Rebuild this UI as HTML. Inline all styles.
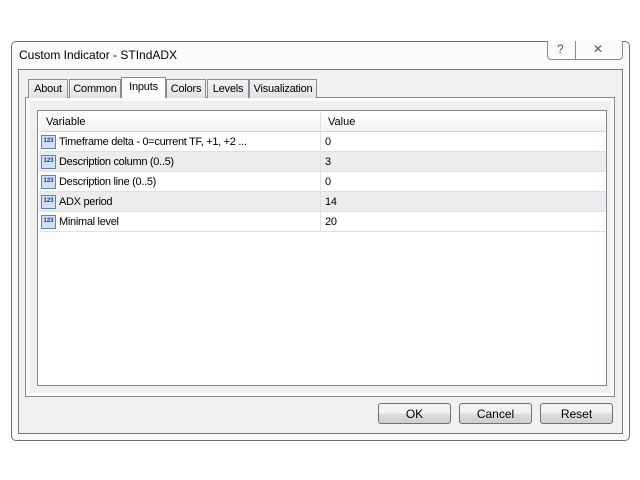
<!DOCTYPE html>
<html><head><style>
body{margin:0;width:640px;height:480px;background:#fff;position:relative;font-family:"Liberation Sans",sans-serif;font-size:11px;color:#000;overflow:hidden}
.a{position:absolute;box-sizing:border-box}
.tab{position:absolute;top:79px;height:19px;border:1px solid #898c95;border-bottom:none;background:linear-gradient(#f2f2f2,#e3e3e3);font-size:11px;letter-spacing:-0.2px;text-align:center;line-height:19px;box-sizing:border-box}
.row{position:absolute;left:1px;width:567px;height:20px;border-bottom:1px solid #e0e0e0;box-sizing:border-box;line-height:21px;letter-spacing:-0.3px}
.ico{position:absolute;left:2px;top:3px;width:15px;height:14px;background:#cfe0f3;border:1px solid #5d86b8;box-sizing:border-box;font-size:6px;line-height:11px;color:#1a3b7a;font-weight:bold;text-align:center;letter-spacing:0}
.btn{position:absolute;top:403px;width:73px;height:21px;border:1px solid #707070;border-radius:3px;background:linear-gradient(#f2f2f2 50%,#dddddd 50%,#cfcfcf);text-align:center;line-height:20px;box-sizing:border-box;font-size:12px}
</style></head><body>
<div class="a" style="left:11px;top:41px;width:619px;height:400px;border:1px solid #6f6f6f;border-radius:5px;background:#fbfbfb"></div>
<div class="a" style="left:19px;top:48px;font-size:12px">Custom Indicator - STIndADX</div>
<div class="a" style="left:547px;top:41px;width:76px;height:19px;border:1px solid #8a8a8a;border-top:none;border-radius:0 0 4px 4px;background:#fbfbfb"></div>
<div class="a" style="left:575px;top:41px;width:1px;height:18px;background:#8a8a8a"></div>
<div class="a" style="left:557px;top:42px;font-size:12px;color:#555">?</div>
<div class="a" style="left:593px;top:42px;font-size:12px;color:#555">✕</div>
<div class="a" style="left:18px;top:69px;width:605px;height:365px;border:1px solid #7a7a7a;background:#f0f0f0"></div>
<div class="a" style="left:25px;top:97px;width:590px;height:300px;border:1px solid #898c95;background:#fcfcfc"></div>
<div class="tab" style="left:28px;width:40px">About</div>
<div class="tab" style="left:69px;width:52px">Common</div>
<div class="tab" style="left:166px;width:40px">Colors</div>
<div class="tab" style="left:207px;width:42px">Levels</div>
<div class="tab" style="left:249px;width:68px">Visualization</div>
<div class="tab" style="left:121px;top:77px;width:45px;height:21px;background:#fcfcfc;line-height:18px">Inputs</div>
<div class="a" style="left:29px;top:101px;width:582px;height:292px;background:#f0f0f0"></div>
<div class="a" style="left:37px;top:110px;width:570px;height:276px;border:1px solid #828790;background:#fff">
<div class="a" style="left:1px;top:1px;width:567px;height:20px;background:linear-gradient(#fff,#f3f3f3);border-bottom:1px solid #d5d5d5;line-height:20px"><span style="position:absolute;left:7px">Variable</span><span style="position:absolute;left:289px">Value</span><div class="a" style="left:281px;top:0;width:1px;height:20px;background:#e0e0e0"></div></div>
<div class="row" style="top:21px;background:#fff"><div class="ico">123</div><span style="position:absolute;left:20px">Timeframe delta - 0=current TF, +1, +2 ...</span><span style="position:absolute;left:286px">0</span></div>
<div class="row" style="top:41px;background:#ececec"><div class="ico">123</div><span style="position:absolute;left:20px">Description column (0..5)</span><span style="position:absolute;left:286px">3</span></div>
<div class="row" style="top:61px;background:#fff"><div class="ico">123</div><span style="position:absolute;left:20px">Description line (0..5)</span><span style="position:absolute;left:286px">0</span></div>
<div class="row" style="top:81px;background:#ececec"><div class="ico">123</div><span style="position:absolute;left:20px">ADX period</span><span style="position:absolute;left:286px">14</span></div>
<div class="row" style="top:101px;background:#fff"><div class="ico">123</div><span style="position:absolute;left:20px">Minimal level</span><span style="position:absolute;left:286px">20</span></div>
<div class="a" style="left:282px;top:21px;width:1px;height:100px;background:#e0e0e0"></div>
</div>
<div class="btn" style="left:378px">OK</div>
<div class="btn" style="left:459px">Cancel</div>
<div class="btn" style="left:540px">Reset</div>
</body></html>
